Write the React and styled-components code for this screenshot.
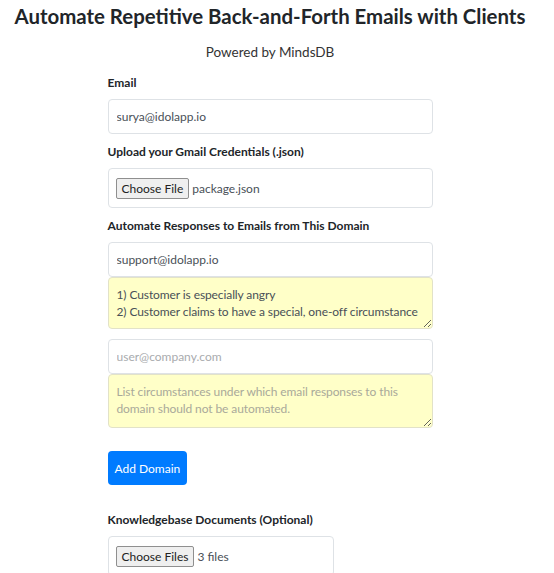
import React from 'react'
import styled, { createGlobalStyle } from 'styled-components'

const GlobalStyle = createGlobalStyle`
  body {
    margin: 0;
    background: #ffffff;
    font-family: Lato, "Noto Sans", sans-serif;
    color: #212529;
  }
`

const Page = styled.div`
  width: 540px;
  display: flex;
  flex-direction: column;
  align-items: center;
`

const Title = styled.h1`
  margin: 4px 0 0;
  font-size: 20.4px;
  font-weight: 700;
  color: #212529;
  white-space: nowrap;
`

const Subtitle = styled.p`
  margin: 16px 0 0;
  font-size: 13.5px;
  color: #333;
`

const Form = styled.form`
  width: 325px;
  display: flex;
  flex-direction: column;
  margin-top: 15px;
`

const Label = styled.label`
  font-size: 12px;
  font-weight: 700;
  margin: ${p => p.$top || 0}px 0 8px;
  line-height: 16px;
`

const TextInput = styled.input`
  box-sizing: border-box;
  height: 35px;
  padding: 0 8px;
  font: inherit;
  font-size: 12px;
  color: #495057;
  border: 1px solid #dee2e6;
  border-radius: 4px;
  outline: none;
  &::placeholder { color: #a9abae; }
`

const Notes = styled.textarea`
  box-sizing: border-box;
  height: ${p => p.$h || 52}px;
  padding: 8px 8px;
  font: inherit;
  font-size: 12px;
  letter-spacing: -0.1px;
  line-height: 17px;
  color: #495057;
  background: #ffffc8;
  border: 1px solid #e2e2c8;
  border-radius: 4px;
  outline: none;
  resize: vertical;
  overflow: hidden;
  &::placeholder { color: #a9a99a; }
`

const FileBox = styled.div`
  box-sizing: border-box;
  height: 40px;
  width: ${p => p.$w || 325}px;
  display: flex;
  align-items: center;
  gap: 3px;
  padding: 0 7px;
  border: 1px solid #dee2e6;
  border-radius: 4px;
  font-size: 12px;
  color: #495057;
`

const FileButton = styled.span`
  box-sizing: border-box;
  height: 21px;
  padding: 0 5px;
  display: inline-flex;
  align-items: center;
  background: #efefef;
  border: 1px solid #8f8f8f;
  border-radius: 2px;
  color: #222;
`

const Group = styled.div`
  display: flex;
  flex-direction: column;
  margin-top: ${p => p.$top || 0}px;
`

const PrimaryButton = styled.button`
  align-self: flex-start;
  margin-top: 23px;
  height: 34px;
  padding: 0 7px;
  font: inherit;
  font-size: 12px;
  color: #fff;
  background: #007bff;
  border: none;
  border-radius: 4px;
`

export default function App() {
  return (
    <>
      <GlobalStyle />
      <Page>
        <Title>Automate Repetitive Back-and-Forth Emails with Clients</Title>
        <Subtitle>Powered by MindsDB</Subtitle>
        <Form onSubmit={e => e.preventDefault()}>
          <Label>Email</Label>
          <TextInput defaultValue="surya@idolapp.io" />

          <Label $top={10}>Upload your Gmail Credentials (.json)</Label>
          <FileBox>
            <FileButton>Choose File</FileButton>
            <span>package.json</span>
          </FileBox>

          <Label $top={10}>Automate Responses to Emails from This Domain</Label>
          <Group>
            <TextInput defaultValue="support@idolapp.io" />
            <Notes
              defaultValue={'1) Customer is especially angry\n2) Customer claims to have a special, one-off circumstance'}
            />
          </Group>
          <Group $top={10}>
            <TextInput placeholder="user@company.com" />
            <Notes $h={54} placeholder="List circumstances under which email responses to this domain should not be automated." />
          </Group>

          <PrimaryButton type="button">Add Domain</PrimaryButton>

          <Label $top={27}>Knowledgebase Documents (Optional)</Label>
          <FileBox $w={226}>
            <FileButton>Choose Files</FileButton>
            <span>3 files</span>
          </FileBox>
        </Form>
      </Page>
    </>
  )
}
